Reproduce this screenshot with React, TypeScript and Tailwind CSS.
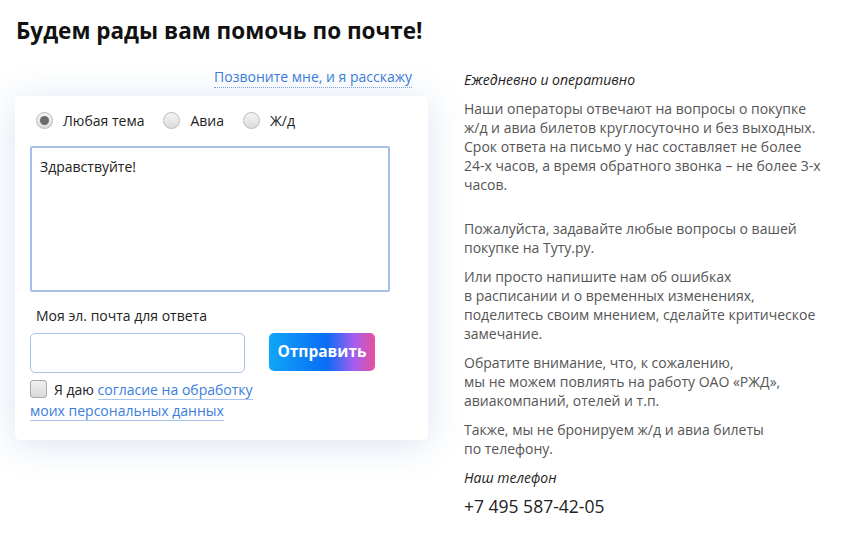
import React from "react";

const font = { fontFamily: '"Open Sans", "Noto Sans", sans-serif' };

function Radio({ checked, label }: { checked?: boolean; label: string }) {
  return (
    <label className="flex items-center gap-[10px]">
      <span className="w-[17px] h-[17px] rounded-full border border-[#b9b9b9] bg-gradient-to-b from-[#f4f4f4] to-[#dcdcdc] flex items-center justify-center">
        {checked && <span className="w-[9px] h-[9px] rounded-full bg-[#6b6b6b]" />}
      </span>
      <span className="text-[14px] text-[#222]">{label}</span>
    </label>
  );
}

export default function App() {
  return (
    <div className="w-[857px] h-[535px] bg-white overflow-hidden text-[#222]" style={font}>
      <h1 className="pl-[16px] pt-[16px] text-[22.5px] font-bold leading-[30px] text-[#111]">
        Будем рады вам помочь по почте!
      </h1>
      <div className="flex mt-[21px]">
        <div className="w-[448px] pl-[15px] flex flex-col">
          <div className="w-[413px] flex justify-end pr-[16px]">
            <span className="text-[14px] leading-[20px] text-[#3b7ddb] border-b border-dotted border-[#7aa6e6]">
              Позвоните мне, и я расскажу
            </span>
          </div>
          <div className="mt-[8px] w-[413px] h-[344px] bg-white rounded-[5px] shadow-[0_4px_36px_rgba(50,100,180,0.18)] pl-[15px] pt-[14px]">
            <div className="flex items-center gap-[19px] pl-[6px] h-[20px]">
              <Radio checked label="Любая тема" />
              <Radio label="Авиа" />
              <Radio label="Ж/д" />
            </div>
            <div className="mt-[16px] w-[360px] h-[146px] border-2 border-[#a4c0ea] rounded-[2px] px-[8px] pt-[8px] text-[14px]">
              Здравствуйте!
            </div>
            <div className="mt-[14px] pl-[6px] text-[14px] leading-[20px]">Моя эл. почта для ответа</div>
            <div className="mt-[7px] flex items-start gap-[24px]">
              <div className="w-[215px] h-[40px] border border-[#a8c3ea] rounded-[5px]" />
              <button className="w-[106px] h-[38px] rounded-[5px] text-white font-bold text-[15.5px] bg-[linear-gradient(90deg,#0ea6f7_0%,#0a6cf5_55%,#a55ef0_80%,#e8509a_100%)]">
                Отправить
              </button>
            </div>
            <div className="mt-[6px] flex items-start">
              <span className="w-[17px] h-[18px] rounded-[3px] border border-[#a9a9a9] bg-gradient-to-b from-[#f0f0f0] to-[#d9d9d9] mr-[7px] mt-[1px]" />
              <span className="text-[14px] leading-[21px]">
                Я даю{" "}
                <span className="text-[#3b7ddb] border-b border-[#a6c4ee]">согласие на обработку</span>
              </span>
            </div>
            <div className="text-[14px] leading-[21px]">
              <span className="text-[#3b7ddb] border-b border-[#a6c4ee]">моих персональных данных</span>
            </div>
          </div>
        </div>
        <div className="pl-[16px] w-[409px] text-[14px] leading-[19px] text-[#555] pt-[3px] whitespace-nowrap">
          <p className="italic text-[#222] text-[14px]">Ежедневно и оперативно</p>
          <p className="mt-[10px]">
            Наши операторы отвечают на вопросы о покупке
            <br />
            ж/д и авиа билетов круглосуточно и без выходных.
            <br />
            Срок ответа на письмо у нас составляет не более
            <br />
            24-х часов, а время обратного звонка – не более 3-х
            <br />
            часов.
          </p>
          <p className="mt-[25px]">
            Пожалуйста, задавайте любые вопросы о вашей
            <br />
            покупке на Туту.ру.
          </p>
          <p className="mt-[10px]">
            Или просто напишите нам об ошибках
            <br />
            в расписании и о временных изменениях,
            <br />
            поделитесь своим мнением, сделайте критическое
            <br />
            замечание.
          </p>
          <p className="mt-[10px]">
            Обратите внимание, что, к сожалению,
            <br />
            мы не можем повлиять на работу ОАО «РЖД»,
            <br />
            авиакомпаний, отелей и т.п.
          </p>
          <p className="mt-[10px]">
            Также, мы не бронируем ж/д и авиа билеты
            <br />
            по телефону.
          </p>
          <p className="mt-[10px] italic text-[#222] text-[14px]">Наш телефон</p>
          <p className="mt-[10px] text-[17.5px] text-[#222]">+7 495 587-42-05</p>
        </div>
      </div>
    </div>
  );
}
